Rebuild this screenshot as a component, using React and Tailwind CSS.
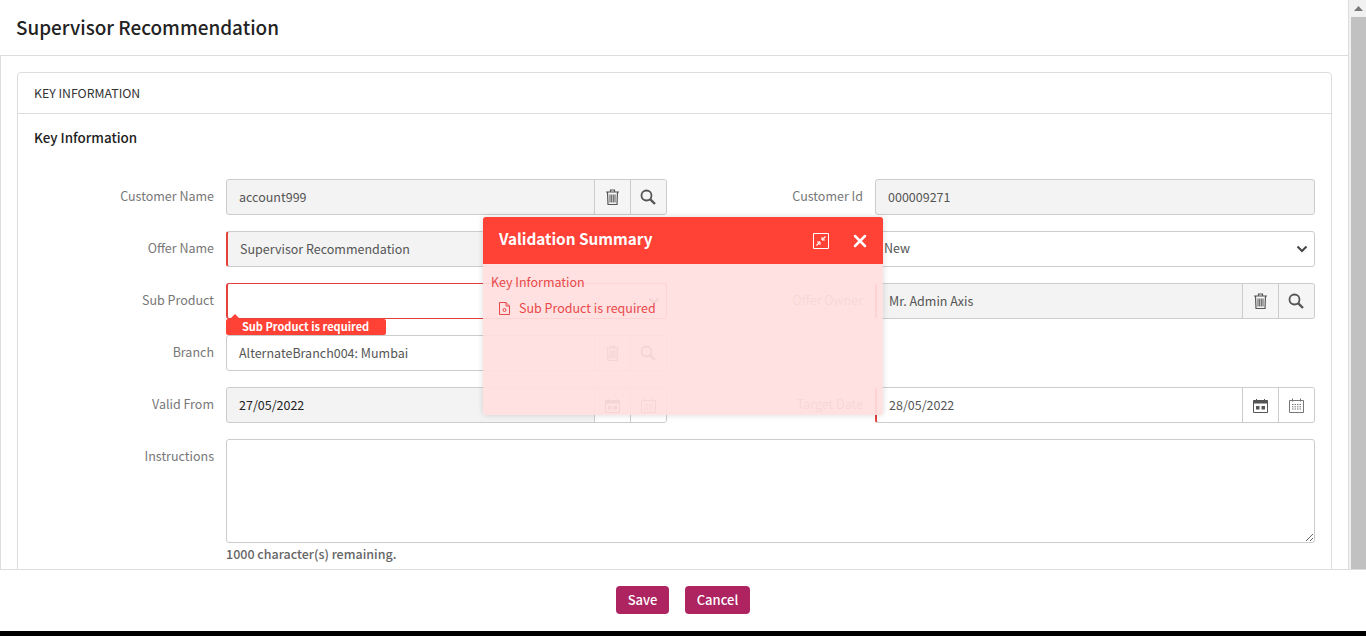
import { X } from "lucide-react";

const fontStack = { fontFamily: '"Noto Sans CJK SC", "Noto Sans", sans-serif' };

function TrashIcon() {
  return (
    <svg width="13" height="16" viewBox="0 0 13 16" fill="none" stroke="currentColor">
      <path d="M0 3h13M4.5 3V1h4v2M1.5 3l.5 12.5h9L11.5 3" strokeWidth="1.2" />
      <path d="M4 5.5v8M5.7 5.5v8M7.3 5.5v8M9 5.5v8" strokeWidth="1" />
    </svg>
  );
}

function SearchIcon() {
  return (
    <svg className="-ml-[2px]" width="16" height="16" viewBox="0 0 16 16" fill="none" stroke="currentColor">
      <circle cx="6.5" cy="6.5" r="5" strokeWidth="1.8" />
      <path d="M10.3 10.3L15 15" strokeWidth="2.4" />
    </svg>
  );
}

function CalendarFill() {
  return (
    <svg width="15" height="15" viewBox="0 0 15 15" fill="none">
      <path d="M.5 2.5h14v12H.5z" stroke="currentColor" />
      <path d="M.5 2.5h14v3H.5z" fill="currentColor" />
      <path d="M3.5 1v2M11.5 1v2" stroke="currentColor" />
      <path d="M3 8h3.5v3.5H3zM8.5 8H12v3.5H8.5z" fill="currentColor" />
    </svg>
  );
}

function CalendarGrid() {
  return (
    <svg width="15" height="15" viewBox="0 0 15 15" fill="none" stroke="#777">
      <path d="M.5 2.5h14v12H.5z" />
      <path d="M3.5 .5v3M11.5 .5v3" />
      <path d="M3 6.5h9M3 8.8h9M3 11h9" strokeDasharray="1.5 1" />
    </svg>
  );
}

function ExpandIcon() {
  return (
    <svg width="16" height="16" viewBox="0 0 16 16" fill="none" stroke="white">
      <path d="M.5.5h15v15H.5z" />
      <path d="M3.5 12.5L7 9M9 7l3.5-3.5" strokeWidth="1.2" />
      <path d="M4 9h3v3M9 4v3h3" strokeWidth="1" />
    </svg>
  );
}

function DocIcon() {
  return (
    <svg width="11" height="13" viewBox="0 0 11 13" fill="none" stroke="currentColor">
      <path d="M.5.5H7l3.5 3.5v8.5H.5z" />
      <path d="M7 .5V4h3.5" />
      <circle cx="5.5" cy="8" r="1.5" />
    </svg>
  );
}

function Addon({ children, className = "bg-[#f5f5f5]" }) {
  return (
    <span className={`flex w-9 shrink-0 items-center justify-center border-l border-[#ccc] text-[#555] ${className}`}>
      {children}
    </span>
  );
}

function Field({ label, labelWidth, width, value, gray, flag, error, addons, chevron, select, textColor = "text-[#555]" }) {
  const edge = error ? "border-[#e3413a]" : "border-[#ccc]";
  const left = flag || error ? "border-l-2 border-l-[#e3413a]" : "";
  return (
    <div className="flex h-9 items-center">
      <label className={`mb-[2px] pr-3 text-right text-[12.5px] leading-5 text-[#777] ${labelWidth}`}>{label}</label>
      <div className={`flex h-9 overflow-hidden rounded-[3px] border ${edge} ${left} ${width} ${gray ? "bg-[#f3f3f3]" : "bg-white"}`}>
        <span className={`flex flex-1 items-center text-[12.5px] ${select ? "pb-[2px] pl-2" : "pl-3"} ${textColor}`}>{value}</span>
        {chevron && (
          <svg className="mr-[6px] self-center" width="12" height="8" viewBox="0 0 12 8" fill="none" stroke="#444" strokeWidth="2">
            <path d="M1.5 1.5L6 6l4.5-4.5" />
          </svg>
        )}
        {addons}
      </div>
    </div>
  );
}

const lookup = (
  <>
    <Addon><TrashIcon /></Addon>
    <Addon><SearchIcon /></Addon>
  </>
);
const lookupWhite = (
  <>
    <Addon className="bg-white"><TrashIcon /></Addon>
    <Addon className="bg-white"><SearchIcon /></Addon>
  </>
);
const dates = (
  <>
    <Addon className="bg-white text-[#333]"><CalendarFill /></Addon>
    <Addon className="bg-white"><CalendarGrid /></Addon>
  </>
);

function ValidationSummary() {
  return (
    <div className="absolute left-[483px] top-[217px] z-20 h-[198px] w-[400px] overflow-hidden rounded-[3px] bg-[rgba(255,223,223,0.93)] shadow-[0_0_6px_rgba(0,0,0,0.15)]">
      <div className="flex h-[47px] items-center bg-[#ff4136] pl-4 pr-[13px] text-white">
        <h2 className="mb-[6px] flex-1 text-[15.3px] font-bold leading-6">Validation Summary</h2>
        <ExpandIcon />
        <X className="ml-[21px]" size={20} strokeWidth={3} />
      </div>
      <div className="px-2 pt-2 text-[#e9494a]">
        <div className="text-[12.5px] leading-5">Key Information</div>
        <div className="mt-1.5 flex items-center pl-2 text-[12.5px] leading-5">
          <DocIcon />
          <span className="ml-[9px]">Sub Product is required</span>
        </div>
      </div>
    </div>
  );
}

export default function App() {
  return (
    <div className="relative h-[636px] overflow-hidden bg-black" style={fontStack}>
      <div className="relative flex h-[631px] flex-col bg-white">
        <div className="flex h-[569px] shrink-0">
          <main className="w-[1349px] shrink-0 overflow-hidden border-r border-[#ddd]">
            <header className="flex h-14 items-center border-b border-[#ddd] pl-4">
              <h1 className="mb-[1px] text-[18.9px] font-medium leading-7 text-[#222]">Supervisor Recommendation</h1>
            </header>
            <div className="border-l border-[#ddd] pl-4 pt-4">
              <section className="h-[520px] w-[1315px] rounded-t-[4px] border border-[#ddd]">
                <div className="flex h-[41px] items-center border-b border-[#ddd] pl-4 text-[12.3px] text-[#333]">KEY INFORMATION</div>
                <div className="px-4 pt-[13px]">
                  <h3 className="text-[13.4px] font-medium leading-5 text-[#222]">Key Information</h3>
                  <div className="mt-8 flex flex-col gap-4">
                    <div className="flex">
                      <Field label="Customer Name" labelWidth="w-[192px]" width="w-[441px]" value="account999" gray addons={lookup} />
                      <Field label="Customer Id" labelWidth="w-[208px]" width="w-[440px]" value="000009271" gray />
                    </div>
                    <div className="flex">
                      <Field label="Offer Name" labelWidth="w-[192px]" width="w-[441px]" value="Supervisor Recommendation" gray flag />
                      <Field label="" labelWidth="w-[208px]" width="w-[440px]" value="New" chevron select />
                    </div>
                    <div className="flex">
                      <div className="relative">
                        <Field label="Sub Product" labelWidth="w-[192px]" width="w-[441px]" value="" error chevron />
                        <div className="absolute left-[192px] top-[36px] z-10 h-4 w-40 rounded-[2px] bg-[#ff4136] pl-4 text-[11px] font-bold leading-[14px] text-white">
                          <span className="absolute left-1 top-[-5px] h-0 w-0 border-x-[5px] border-b-[5px] border-x-transparent border-b-[#ff4136]" />
                          Sub Product is required
                        </div>
                      </div>
                      <Field label="Offer Owner" labelWidth="w-[208px]" width="w-[440px]" value="Mr. Admin Axis" gray flag addons={lookup} />
                    </div>
                    <div className="flex">
                      <Field label="Branch" labelWidth="w-[192px]" width="w-[441px]" value="AlternateBranch004: Mumbai" addons={lookupWhite} />
                    </div>
                    <div className="flex">
                      <Field label="Valid From" labelWidth="w-[192px]" width="w-[441px]" value="27/05/2022" gray addons={dates} textColor="text-[#222]" />
                      <Field label="Target Date" labelWidth="w-[208px]" width="w-[440px]" value="28/05/2022" flag addons={dates} />
                    </div>
                    <div className="flex">
                      <label className="w-[192px] pr-3 pt-[7px] text-right text-[12.5px] leading-5 text-[#777]">Instructions</label>
                      <div className="w-[1089px]">
                        <textarea className="block h-[104px] w-full rounded-[3px] border border-[#ccc] bg-white" />
                        <p className="mt-[1px] text-[12.5px] font-medium leading-5 text-[#666]">1000 character(s) remaining.</p>
                      </div>
                    </div>
                  </div>
                </div>
              </section>
            </div>
          </main>
          <div className="flex flex-1 flex-col bg-[#f1f1f1] pl-[2px]">
            <div className="flex h-[17px] items-center justify-center">
              <svg width="9" height="5" viewBox="0 0 9 5" fill="#777">
                <path d="M4.5 0L9 5H0z" />
              </svg>
            </div>
            <div className="flex-1 bg-[#c1c1c1]" />
          </div>
        </div>
        <footer className="flex h-[62px] items-start justify-center gap-4 border-t border-[#ddd] pt-4">
          <button className="h-7 w-[53px] rounded-[4px] bg-[#ad2460] text-[13px] font-medium text-white">Save</button>
          <button className="h-7 w-[65px] rounded-[4px] bg-[#ad2460] text-[13px] font-medium text-white">Cancel</button>
        </footer>
      </div>
      <ValidationSummary />
    </div>
  );
}
